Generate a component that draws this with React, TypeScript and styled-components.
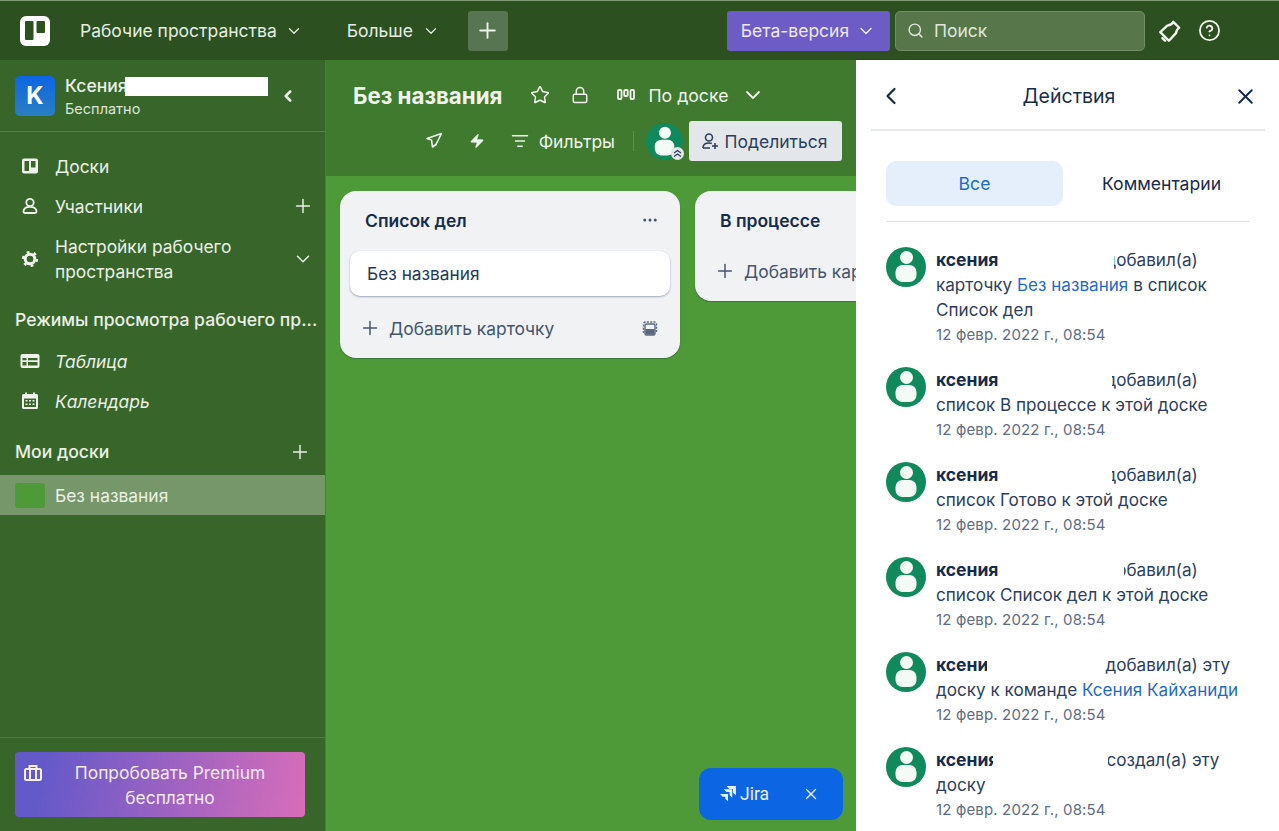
import React from "react";
import styled, { createGlobalStyle } from "styled-components";
import { ChevronDown, ChevronLeft, CircleHelp, Ellipsis, ListFilter, Lock, Plus, Search, Star, X, Zap } from "lucide-react";

const Global = createGlobalStyle`
  html, body { margin: 0; padding: 0; height: 100%; overflow: hidden; }
  body { font-family: Inter, "Noto Sans", sans-serif; -webkit-font-smoothing: antialiased; }
  #root { height: 100vh; }
  * { box-sizing: border-box; }
`;

const Page = styled.div`
  width: 1279px; height: 831px; display: flex; flex-direction: column; overflow: hidden; background: #4f9a38;
`;
const TopBar = styled.header`
  height: 60px; flex: none; display: flex; align-items: center; padding: 0 0 0 20px;
  background: #2c501f; color: #e6ede3; border-top: 1px solid #7d9a72; font-size: 17.5px;
`;
const Logo = styled.svg`width: 30px; height: 30px; flex: none; margin-right: 30px;`;
const NavItem = styled.div<{ $gap: number; $after: number }>`
  display: flex; align-items: center; gap: ${p => p.$gap}px; margin-right: ${p => p.$after}px; white-space: nowrap;
`;
const AddButton = styled.div`
  width: 40px; height: 40px; background: #577550; border-radius: 3px; display: flex; align-items: center; justify-content: center; margin-right: 219px;
`;
const BetaButton = styled.div`
  width: 163px; height: 40px; background: #6e5cc6; border-radius: 3px; display: flex; align-items: center; justify-content: center; gap: 7px; margin-right: 5px; color: #ece9fa;
`;
const SearchBox = styled.div`
  width: 250px; height: 40px; background: #57774b; border: 1px solid #728d67; border-radius: 5px; display: flex; align-items: center; gap: 10px; padding-left: 11px; margin-right: 12px; color: #dfe7db;
`;
const HeadIcons = styled.div`display: flex; align-items: center; gap: 15px;`;

const Body = styled.div`flex: 1; display: flex; min-height: 0;`;
const Side = styled.aside`
  width: 326px; flex: none; background: #38662a; border-right: 1px solid #4d7d3d; color: #eaf0e6; display: flex; flex-direction: column; font-size: 17.4px;
`;
const SideHead = styled.div`
  height: 72px; flex: none; display: flex; align-items: center; padding-left: 15px; border-bottom: 1px solid #55824a; position: relative;
`;
const Badge = styled.div`
  width: 40px; height: 40px; border-radius: 5px; background: linear-gradient(#0c66e4, #2a7fc0); color: #fff; font-weight: 700; font-size: 24px; display: flex; align-items: center; justify-content: center; margin-right: 10px;
`;
const HeadText = styled.div`display: flex; flex-direction: column; width: 214px; gap: 2px;`;
const OrgName = styled.div`font-size: 17.5px; font-weight: 500; line-height: 24px; position: relative;`;
const NameMask = styled.span`position: absolute; left: 60px; top: 3px; width: 143px; height: 19px; background: #fff;`;
const Plan = styled.div`font-size: 14.5px; line-height: 18px; color: #dce5d8;`;
const SideNav = styled.nav`padding-top: 14px; display: flex; flex-direction: column; flex: 1;`;
const NavRow = styled.div<{ $tall?: boolean; $italic?: boolean }>`
  height: ${p => (p.$tall ? 65 : 40)}px; flex: none; display: flex; align-items: center; padding: 0 11px 0 20px; line-height: 25px; font-style: ${p => (p.$italic ? "italic" : "normal")};
`;
const RowIcon = styled.svg`width: 20px; height: 20px; flex: none; margin-right: 15px;`;
const RowText = styled.span`flex: 1;`;
const SectionTitle = styled.div<{ $top: number; $bottom: number }>`
  display: flex; align-items: center; justify-content: space-between; padding: 0 14px 0 15px; font-weight: 500; font-size: 17.6px; line-height: 24px; white-space: nowrap; margin: ${p => p.$top}px 0 ${p => p.$bottom}px;
`;
const BoardRow = styled.div`
  height: 40px; background: #76976a; display: flex; align-items: center; padding-left: 15px; gap: 10px;
`;
const Swatch = styled.div`width: 30px; height: 25px; background: #4f9a38; border-radius: 3px;`;
const SideFoot = styled.div`
  height: 94px; flex: none; border-top: 1px solid #4d7d3d; padding: 14px 20px 0 15px;
`;
const Premium = styled.div`
  width: 290px; height: 65px; border-radius: 4px; background: linear-gradient(100deg, #6459c9 10%, #d86db9 100%); display: flex; align-items: center; padding-left: 9px; color: #f3e8f6; line-height: 25px; position: relative;
`;
const PremiumIcon = styled.svg`position: absolute; left: 9px; top: 12px; width: 18px; height: 18px;`;
const PremiumText = styled.div`width: 100%; text-align: center; padding: 0 0 0 11px;`;

const Main = styled.main`flex: 1; min-width: 0; display: flex; flex-direction: column; position: relative; overflow: hidden;`;
const BoardHead = styled.div`
  height: 116px; flex: none; background: #3f7a2e; color: #f0f4ed; display: flex; flex-direction: column; padding: 0 14px 0 27px;
`;
const TitleRow = styled.div`height: 60px; padding-top: 10px; flex: none; display: flex; align-items: center; font-size: 17.7px;`;
const BoardTitle = styled.h1`margin: 0 28px 0 0; font-size: 22.3px; font-weight: 700; white-space: nowrap;`;
const TitleIcon = styled.div<{ $after: number }>`display: flex; margin-right: ${p => p.$after}px; align-items: center; gap: 13px; white-space: nowrap;`;
const ToolRow = styled.div`display: flex; align-items: center; justify-content: flex-end; height: 40px; margin-top: 1px; font-size: 17.5px;`;
const Tool = styled.div<{ $after: number }>`display: flex; align-items: center; gap: 10px; margin-right: ${p => p.$after}px; white-space: nowrap;`;
const ToolSep = styled.div`width: 1px; height: 20px; background: #5f9150; margin-right: 12px;`;
const Share = styled.div`
  width: 153px; height: 40px; background: #e4e7ea; border-radius: 3px; color: #2c3e5d; display: flex; align-items: center; justify-content: center; gap: 5px; padding-right: 2px; font-size: 17.5px; white-space: nowrap; margin-left: 6px;
`;
const AvatarWrap = styled.div`position: relative; width: 37px; height: 37px;`;
const Chevrons = styled.svg`position: absolute; right: -1px; bottom: 0; width: 13px; height: 13px;`;

const Lists = styled.div`flex: 1; display: flex; align-items: flex-start; gap: 15px; padding: 15px 0 0 14px; background: #4f9a38;`;
const List = styled.section`
  width: 340px; flex: none; background: #f0f2f4; border-radius: 16px; padding: 0 10px; box-shadow: 0 1px 1px rgba(9,30,66,.3); color: #172b4d;
`;
const ListHead = styled.div`
  height: 60px; padding: 0 11px 2px 15px; display: flex; align-items: center; justify-content: space-between; font-size: 17.5px; font-weight: 600;
`;
const Card = styled.div`
  height: 45px; background: #fff; border-radius: 10px; box-shadow: 0 1px 2px rgba(9,30,66,.35); display: flex; align-items: center; padding-left: 17px; font-size: 17.3px; color: #25385a;
`;
const AddRow = styled.div<{ $top: number }>`
  display: flex; align-items: center; height: 40px; margin-top: ${p => p.$top}px; margin-bottom: 10px; padding: 0 11px 0 9px; gap: 8px; font-size: 17.4px; color: #46556e; white-space: nowrap;
`;
const AddLabel = styled.span`flex: 1;`;
const Jira = styled.div`
  position: absolute; left: 373px; bottom: 11px; width: 144px; height: 52px; background: #0c66e4; border-radius: 12px; color: #e8f1ff; display: flex; align-items: center; padding-left: 20px; font-size: 17.5px; font-family: Roboto, Inter, sans-serif;
`;
const JiraLabel = styled.span`margin-left: 3px; margin-right: 33px;`;

const Panel = styled.aside`
  width: 423px; flex: none; background: #fff; display: flex; flex-direction: column; padding: 0 14px 0 15px; color: #172b4d; box-shadow: -1px 0 2px rgba(0,0,0,.12);
`;
const PanelHead = styled.div`
  height: 71px; flex: none; display: flex; align-items: center; justify-content: space-between; padding: 3px 7px 0 6px; border-bottom: 2px solid #e6e8eb; font-size: 19.5px;
`;
const Tabs = styled.div`margin: 30px 15px 0; display: flex; align-items: center; height: 61px; border-bottom: 1px solid #dfe2e6; padding-bottom: 16px; font-size: 17.6px;`;
const Tab = styled.div<{ $on?: boolean }>`
  width: 177px; height: 45px; border-radius: 10px; display: flex; align-items: center; justify-content: center; background: ${p => (p.$on ? "#e4effb" : "transparent")}; color: ${p => (p.$on ? "#1f6bc8" : "#172b4d")};
`;
const TabWide = styled(Tab)`width: 187px; padding-left: 10px;`;
const Feed = styled.div`margin: 25px 15px 0; display: flex; flex-direction: column; gap: 20px;`;
const Item = styled.article`display: flex; gap: 10px;`;
const ItemBody = styled.div`flex: 1; font-size: 17.1px; line-height: 25px; color: #2c3e5d;`;
const Name = styled.b`font-weight: 700; font-size: 17.5px; color: #172b4d;`;
const Gap = styled.span<{ $w: number; $l: number; $r: number }>`
  display: inline-block; width: ${p => p.$w}px; height: 1px; position: relative;
  &::after { content: ""; position: absolute; left: -${p => p.$l}px; right: -${p => p.$r}px; top: -20px; height: 24px; background: #fff; }
`;
const Linked = styled.a`color: #1f6bc8;`;
const When = styled.div`font-size: 15px; letter-spacing: .15px; line-height: 25px; color: #5e6c84;`;

const White = "#f0f4ed";
const TrelloLogo = () => (
  <Logo viewBox="0 0 30 30">
    <rect width="30" height="30" rx="6" fill="#fff" />
    <rect x="5" y="5" width="8.5" height="19" rx="1" fill="#2c501f" />
    <rect x="16.5" y="5" width="8.5" height="12" rx="1" fill="#2c501f" />
  </Logo>
);
const AvatarIcon = ({ size }: { size: number }) => (
  <svg width={size} height={size} viewBox="0 0 40 40" style={{ flex: "none" }}>
    <circle cx="20" cy="20" r="20" fill="#108a5c" />
    <circle cx="20.500" cy="10.500" r="6.500" fill="#f4fbf7" />
    <rect x="9.500" y="18" width="21" height="17" rx="7" fill="#f4fbf7" />
  </svg>
);

const feed = [
  { w: 107, l: 0, r: 9, text: <>карточку <Linked>Без названия</Linked> в список Список дел</>, verb: "добавил(а)" },
  { w: 107, l: 0, r: 7, text: <>список В процессе к этой доске</>, verb: "добавил(а)" },
  { w: 107, l: 0, r: 7, text: <>список Готово к этой доске</>, verb: "добавил(а)" },
  { w: 107, l: 0, r: 19, text: <>список Список дел к этой доске</>, verb: "добавил(а)" },
  { w: 107, l: 11, r: 0, text: <>доску к команде <Linked>Ксения Кайханиди</Linked></>, verb: "добавил(а) эту" },
  { w: 108, l: 5, r: 2, text: <>доску</>, verb: "создал(а) эту" },
];

export default function App() {
  return (
    <Page>
      <Global />
      <TopBar>
        <TrelloLogo />
        <NavItem $gap={8} $after={44}>Рабочие пространства <ChevronDown size={18} strokeWidth={1.7} /></NavItem>
        <NavItem $gap={9} $after={28}>Больше <ChevronDown size={18} strokeWidth={1.7} /></NavItem>
        <AddButton><Plus size={25} strokeWidth={1.8} color="#eef2ec" /></AddButton>
        <BetaButton>Бета-версия <ChevronDown size={20} strokeWidth={1.8} /></BetaButton>
        <SearchBox><Search size={17} strokeWidth={2} /> Поиск</SearchBox>
        <HeadIcons>
          <svg width="26" height="26" viewBox="0 0 24 24" fill="none" stroke="#f2f5f0" strokeWidth="2.200" strokeLinejoin="round" strokeLinecap="round">
            <path d="M15 3.500 20.500 9c-2 1-2.500 2.500-3 5L11 21 3 13l6.500-6c2.500-.4 4.500-1 5.500-3.500Z" />
            <path d="M5 18.500 7.500 21" />
          </svg>
          <CircleHelp size={23} strokeWidth={1.9} color="#f2f5f0" />
        </HeadIcons>
      </TopBar>
      <Body>
        <Side>
          <SideHead>
            <Badge>K</Badge>
            <HeadText>
              <OrgName>Ксения<NameMask /></OrgName>
              <Plan>Бесплатно</Plan>
            </HeadText>
            <ChevronLeft size={18} strokeWidth={3.400} />
          </SideHead>
          <SideNav>
            <NavRow>
              <RowIcon viewBox="0 0 20 20"><rect x="2" y="2.500" width="16" height="15" rx="2" fill={White} /><rect x="4.500" y="5" width="4.500" height="10" fill="#38662a" /><rect x="11" y="5" width="4.500" height="6.500" fill="#38662a" /></RowIcon>
              <RowText>Доски</RowText>
            </NavRow>
            <NavRow>
              <RowIcon viewBox="0 0 20 20" fill="none" stroke={White} strokeWidth="1.800"><circle cx="10" cy="6.500" r="3.700" /><path d="M3.500 15.500c0-3 2.500-4.700 6.500-4.700s6.500 1.700 6.500 4.700c0 1-.6 1.500-1.500 1.500H5c-.9 0-1.500-.5-1.500-1.500Z" /></RowIcon>
              <RowText>Участники</RowText>
              <Plus size={22} strokeWidth={1.600} />
            </NavRow>
            <NavRow $tall>
              <RowIcon viewBox="0 0 20 20" fill="none" stroke={White}>
                <circle cx="10" cy="10" r="4.800" strokeWidth="3" />
                <circle cx="10" cy="10" r="7" strokeWidth="2.200" strokeDasharray="2.900 4.430" />
              </RowIcon>
              <RowText>Настройки рабочего пространства</RowText>
              <ChevronDown size={22} strokeWidth={1.600} />
            </NavRow>
            <SectionTitle $top={17} $bottom={9}>Режимы просмотра рабочего пр...</SectionTitle>
            <NavRow $italic>
              <RowIcon viewBox="0 0 20 20"><rect x="0.500" y="3" width="19" height="14" rx="2" fill={White} /><path d="M2.500 7h4v2.300h-4zM8 7h9.500v2.300H8zM2.500 11h4v3.500h-4zM8 11h9.500v3.500H8z" fill="#38662a" /></RowIcon>
              <RowText>Таблица</RowText>
            </NavRow>
            <NavRow $italic>
              <RowIcon viewBox="0 0 20 20"><path d="M5 1.500h2V3h6V1.500h2V3h1.500A1.500 1.500 0 0 1 18 4.500v12a1.500 1.500 0 0 1-1.500 1.500h-13A1.500 1.500 0 0 1 2 16.500v-12A1.500 1.500 0 0 1 3.500 3H5Z" fill={White} /><rect x="4" y="7.500" width="12" height="8.500" rx=".5" fill="#38662a" /><path d="M5.500 9h2v1.500h-2zM9 9h2v1.500H9zM12.500 9h2v1.500h-2zM5.500 12.500h2V14h-2zM9 12.500h2V14H9zM12.500 12.500h2V14h-2z" fill={White} /></RowIcon>
              <RowText>Календарь</RowText>
            </NavRow>
            <SectionTitle $top={19} $bottom={11}>Мои доски <Plus size={22} strokeWidth={1.600} /></SectionTitle>
            <BoardRow><Swatch />Без названия</BoardRow>
          </SideNav>
          <SideFoot>
            <Premium>
              <PremiumIcon viewBox="0 0 18 18" fill="none" stroke="#f6eef8" strokeWidth="2"><rect x="1" y="5" width="16" height="11" rx="1.500" /><path d="M5.500 5V2h7v3M6 5v11M12 5v11" /></PremiumIcon>
              <PremiumText>Попробовать Premium бесплатно</PremiumText>
            </Premium>
          </SideFoot>
        </Side>
        <Main>
          <BoardHead>
            <TitleRow>
              <BoardTitle>Без названия</BoardTitle>
              <TitleIcon $after={21}><Star size={20} strokeWidth={1.800} /></TitleIcon>
              <TitleIcon $after={28}><Lock size={18} strokeWidth={2} /></TitleIcon>
              <TitleIcon $after={0}>
                <svg width="18" height="14" viewBox="0 0 18 14" fill="none" stroke={White} strokeWidth="1.800"><rect x="1" y="2" width="3.500" height="9" rx="1" /><rect x="7.200" y="2" width="3.500" height="6" rx="1" /><rect x="13.500" y="2" width="3.500" height="9" rx="1" /></svg>
                По доске
                <ChevronDown size={24} strokeWidth={1.800} />
              </TitleIcon>
            </TitleRow>
            <ToolRow>
              <Tool $after={26}>
                <svg width="18" height="18" viewBox="0 0 18 18" fill="none" stroke={White} strokeWidth="1.600" strokeLinejoin="round"><path d="M16.500 1.500 2 6.500l4.500 1.500L7.500 15 11 12.500 16.500 1.500Z" /></svg>
              </Tool>
              <Tool $after={26}><Zap size={16} fill={White} strokeWidth={1} /></Tool>
              <Tool $after={18}><ListFilter size={18} strokeWidth={1.800} /> Фильтры</Tool>
              <ToolSep />
              <AvatarWrap>
                <AvatarIcon size={37} />
                <Chevrons viewBox="0 0 13 13"><circle cx="6.500" cy="6.500" r="6.500" fill="#e4e7ea" /><path d="M3 6l3.500-2.500L10 6M3 9.500 6.500 7 10 9.500" fill="none" stroke="#2c3e5d" strokeWidth="1.300" /></Chevrons>
              </AvatarWrap>
              <Share>
                <svg width="18" height="18" viewBox="0 0 18 18" fill="none" stroke="#2c3e5d" strokeWidth="1.600"><circle cx="8" cy="5.500" r="3.500" /><path d="M2 16c0-3.500 2-5 6-5 1 0 2 .1 2.800.4M2 16h7M14 11v6M11 14h6" /></svg>
                Поделиться
              </Share>
            </ToolRow>
          </BoardHead>
          <Lists>
            <List>
              <ListHead>Список дел <Ellipsis size={18} color="#46556e" /></ListHead>
              <Card>Без названия</Card>
              <AddRow $top={12}>
                <Plus size={22} strokeWidth={1.600} />
                <AddLabel>Добавить карточку</AddLabel>
                <svg width="18" height="18" viewBox="0 0 18 18" fill="none" stroke="#5a6980" strokeWidth="1.400"><path d="M2.500 14V5a2 2 0 0 1 2-2h9a2 2 0 0 1 2 2v9" strokeDasharray="2 1.300" /><rect x="4" y="5" width="10" height="11" rx="1.500" /><rect x="4.500" y="10" width="9" height="5.500" fill="#5a6980" stroke="none" /></svg>
              </AddRow>
            </List>
            <List>
              <ListHead>В процессе</ListHead>
              <AddRow $top={0}>
                <Plus size={22} strokeWidth={1.600} />
                <AddLabel>Добавить карточку</AddLabel>
              </AddRow>
            </List>
          </Lists>
          <Jira>
            <svg width="18" height="18" viewBox="0 0 17 17" fill="#e8f1ff"><path d="M7 1h9v9l-2.800-2.800V3.800H9.800ZM4.500 4h8v8l-2.500-2.500V6.500H7ZM1 8.500h7.500v7L6 13v-2H3.500Z" /></svg>
            <JiraLabel>Jira</JiraLabel>
            <X size={18} strokeWidth={1.800} />
          </Jira>
        </Main>
        <Panel>
          <PanelHead>
            <ChevronLeft size={28} strokeWidth={1.900} color="#172b4d" />
            Действия
            <X size={25} strokeWidth={1.900} color="#172b4d" />
          </PanelHead>
          <Tabs>
            <Tab $on>Все</Tab>
            <TabWide>Комментарии</TabWide>
          </Tabs>
          <Feed>
            {feed.map((f, i) => (
              <Item key={i}>
                <AvatarIcon size={40} />
                <ItemBody>
                  <Name>ксения</Name>
                  <Gap $w={f.w} $l={f.l} $r={f.r} />
                  {f.verb} {f.text}
                  <When>12 февр. 2022 г., 08:54</When>
                </ItemBody>
              </Item>
            ))}
          </Feed>
        </Panel>
      </Body>
    </Page>
  );
}
